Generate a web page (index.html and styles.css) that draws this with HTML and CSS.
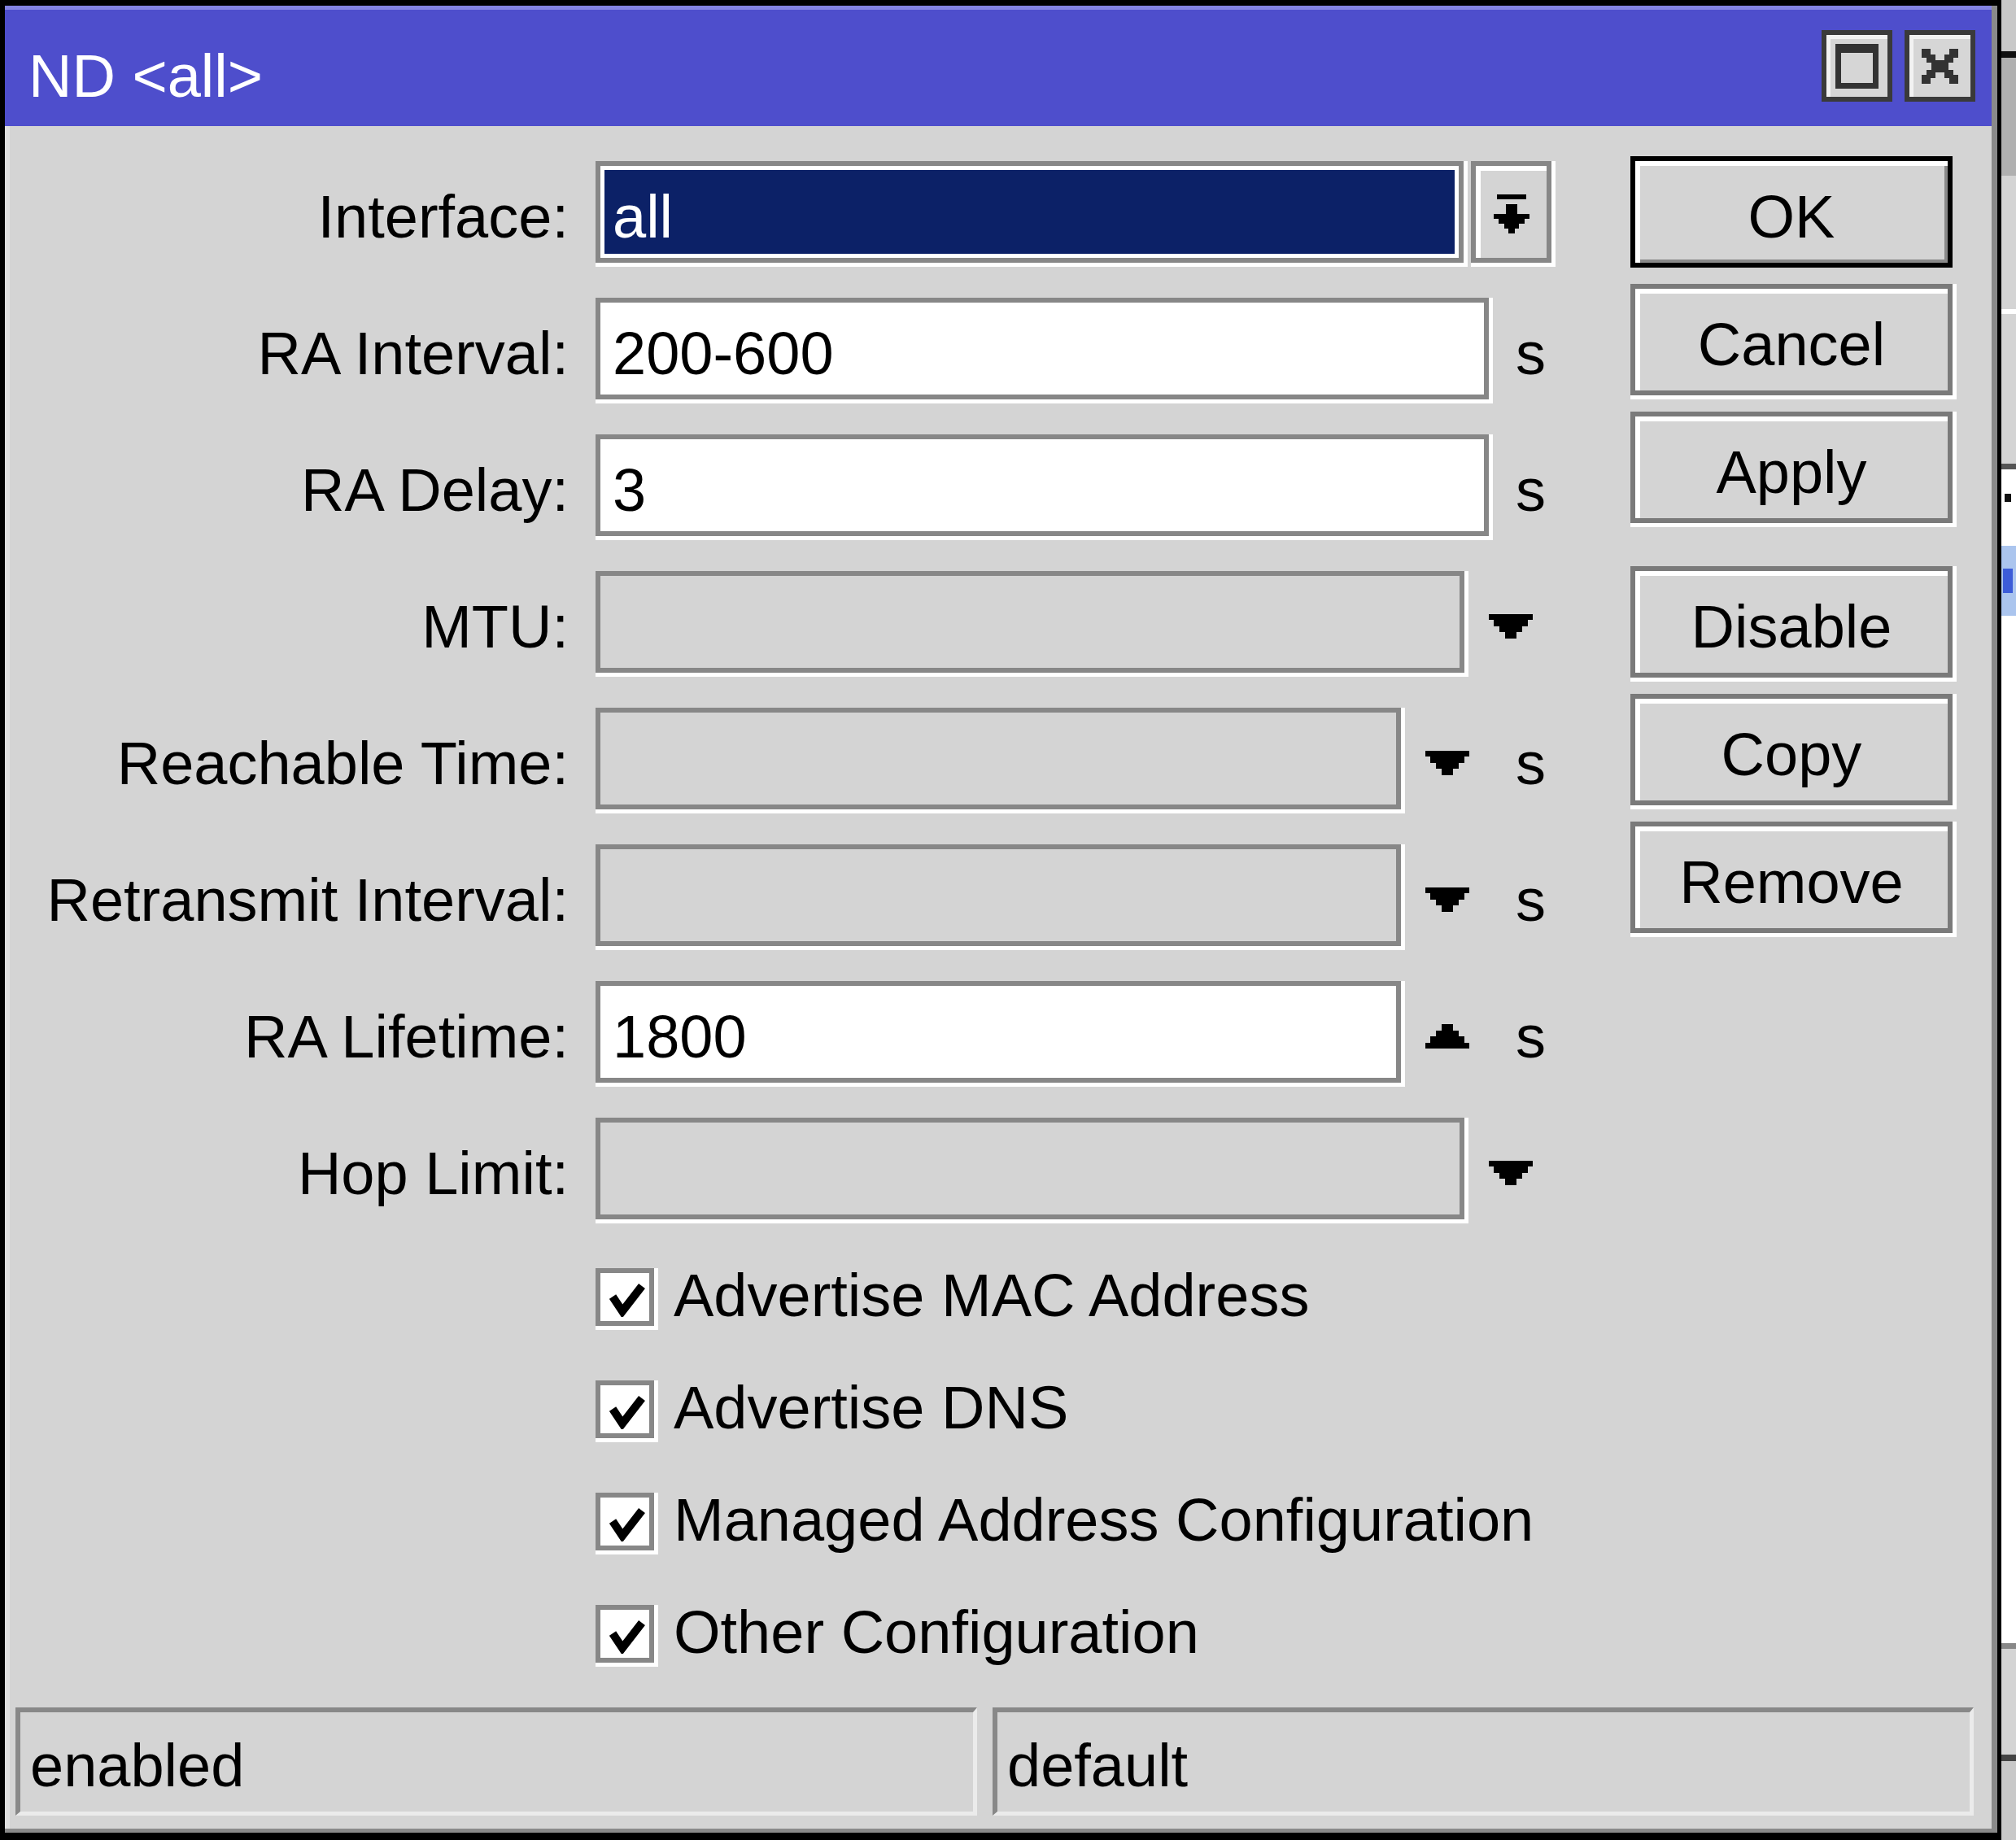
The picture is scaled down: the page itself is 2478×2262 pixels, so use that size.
FILE: index.html
```html
<!DOCTYPE html>
<html>
<head>
<meta charset="utf-8">
<title>ND &lt;all&gt;</title>
<link rel="stylesheet" href="styles.css">
</head>
<body>
<div class="screen">
  <div class="window">
    <div class="titlebar">
      <span class="title">ND &lt;all&gt;</span>
      <div class="tbtns">
        <div class="tbtn"><div class="maxicon"></div></div>
        <div class="tbtn">
          <svg class="closeicon" viewBox="0 0 45 43" width="45" height="43">
            <path d="M0 0H11V7H17V14H28V7H34V0H45V11H39V17H33V26H39V32H45V43H34V36H28V29H17V36H11V43H0V32H6V26H12V17H6V11H0Z" fill="#333"/>
          </svg>
        </div>
      </div>
    </div>
    <div class="body">
      <div class="main">
        <div class="form">
          <div class="row">
            <div class="label">Interface:</div>
            <div class="ctrl">
              <div class="field combo w-combo"><div class="sel">all</div></div>
              <div class="ddbtn">
                <svg viewBox="0 0 44 48" width="44" height="48">
                  <rect x="4" y="0" width="36" height="6" fill="#000"/>
                  <rect x="15" y="12" width="14" height="12" fill="#000"/>
                  <path d="M0 24H44V30H38V36H31V42H26V48H18V42H13V36H6V30H0Z" fill="#000"/>
                </svg>
              </div>
            </div>
          </div>
          <div class="row">
            <div class="label">RA Interval:</div>
            <div class="ctrl"><div class="field white w-long">200-600</div></div>
            <div class="unit">s</div>
          </div>
          <div class="row">
            <div class="label">RA Delay:</div>
            <div class="ctrl"><div class="field white w-long">3</div></div>
            <div class="unit">s</div>
          </div>
          <div class="row">
            <div class="label">MTU:</div>
            <div class="ctrl">
              <div class="field w-mid"></div>
              <svg class="arrow" viewBox="0 0 54 30" width="54" height="30"><path d="M0 0H54V7H48V15H41V22H34V30H20V22H13V15H6V7H0Z" fill="#000"/></svg>
            </div>
          </div>
          <div class="row">
            <div class="label">Reachable Time:</div>
            <div class="ctrl">
              <div class="field w-short"></div>
              <svg class="arrow" viewBox="0 0 54 30" width="54" height="30"><path d="M0 0H54V7H48V15H41V22H34V30H20V22H13V15H6V7H0Z" fill="#000"/></svg>
            </div>
            <div class="unit">s</div>
          </div>
          <div class="row">
            <div class="label">Retransmit Interval:</div>
            <div class="ctrl">
              <div class="field w-short"></div>
              <svg class="arrow" viewBox="0 0 54 30" width="54" height="30"><path d="M0 0H54V7H48V15H41V22H34V30H20V22H13V15H6V7H0Z" fill="#000"/></svg>
            </div>
            <div class="unit">s</div>
          </div>
          <div class="row">
            <div class="label">RA Lifetime:</div>
            <div class="ctrl">
              <div class="field white w-short">1800</div>
              <svg class="arrow" viewBox="0 0 54 30" width="54" height="30"><path d="M20 0H34V8H41V15H48V23H54V30H0V23H6V15H13V8H20Z" fill="#000"/></svg>
            </div>
            <div class="unit">s</div>
          </div>
          <div class="row">
            <div class="label">Hop Limit:</div>
            <div class="ctrl">
              <div class="field w-mid"></div>
              <svg class="arrow" viewBox="0 0 54 30" width="54" height="30"><path d="M0 0H54V7H48V15H41V22H34V30H20V22H13V15H6V7H0Z" fill="#000"/></svg>
            </div>
          </div>

          <div class="checks">
            <div class="check">
              <div class="cbox"><svg viewBox="0 0 44 42" width="44" height="42"><polyline points="4,17 16,35 40,4" fill="none" stroke="#000" stroke-width="10"/></svg></div>
              <span class="clabel">Advertise MAC Address</span>
            </div>
            <div class="check">
              <div class="cbox"><svg viewBox="0 0 44 42" width="44" height="42"><polyline points="4,17 16,35 40,4" fill="none" stroke="#000" stroke-width="10"/></svg></div>
              <span class="clabel">Advertise DNS</span>
            </div>
            <div class="check">
              <div class="cbox"><svg viewBox="0 0 44 42" width="44" height="42"><polyline points="4,17 16,35 40,4" fill="none" stroke="#000" stroke-width="10"/></svg></div>
              <span class="clabel">Managed Address Configuration</span>
            </div>
            <div class="check">
              <div class="cbox"><svg viewBox="0 0 44 42" width="44" height="42"><polyline points="4,17 16,35 40,4" fill="none" stroke="#000" stroke-width="10"/></svg></div>
              <span class="clabel">Other Configuration</span>
            </div>
          </div>
        </div>

        <div class="buttons">
          <div class="btn default">OK</div>
          <div class="btn">Cancel</div>
          <div class="btn">Apply</div>
          <div class="btn sep">Disable</div>
          <div class="btn">Copy</div>
          <div class="btn">Remove</div>
        </div>
      </div>

      <div class="status">
        <div class="panel p1">enabled</div>
        <div class="panel p2">default</div>
      </div>
    </div>
  </div>

  <div class="sidewin">
    <div class="sw sw-a"></div>
    <div class="sw sw-b"></div>
    <div class="sw sw-c"></div>
    <div class="sw sw-d"></div>
    <div class="sw sw-e"></div>
    <div class="sw sw-f"></div>
    <div class="sw sw-g"></div>
    <div class="sw sw-h"><span class="frag"></span></div>
    <div class="sw sw-i"><span class="frag blue"></span></div>
    <div class="sw sw-j"></div>
    <div class="sw sw-k"></div>
    <div class="sw sw-l"></div>
    <div class="sw sw-m"></div>
    <div class="sw sw-n"></div>
  </div>
</div>
</body>
</html>
```

FILE: styles.css
```css
* {
  box-sizing: border-box;
}

html, body {
  margin: 0;
  padding: 0;
}

body {
  background: #000;
  width: 2478px;
  height: 2262px;
  overflow: hidden;
  font-family: "Liberation Sans", Arial, sans-serif;
  font-size: 74px;
  color: #000;
}

.screen {
  display: flex;
  align-items: flex-start;
  padding-left: 6px;
  height: 2262px;
}

/* ---------- window ---------- */
.window {
  width: 2449px;
  height: 2246px;
  margin-top: 7px;
  flex-shrink: 0;
  background: #d4d4d4;
  border-right: 7px solid #8a8a8a;
  border-bottom: 5px solid #8a8a8a;
  display: flex;
  flex-direction: column;
}

.titlebar {
  height: 148px;
  flex-shrink: 0;
  background: #4e4ecc;
  border-top: 5px solid #8383e2;
  display: flex;
  align-items: flex-start;
  justify-content: space-between;
  padding: 0 20px 0 29px;
}

.title {
  color: #fff;
  line-height: 74px;
  margin-top: 45px;
  white-space: nowrap;
}

.tbtns {
  display: flex;
  gap: 15px;
  margin-top: 25px;
}

.tbtn {
  width: 87px;
  height: 88px;
  border: 6px solid #3a3a3a;
  background: #d6d6d6;
  box-shadow: inset 5px 5px 0 #f2f2f2;
  display: flex;
  align-items: center;
  justify-content: center;
}

.maxicon {
  width: 53px;
  height: 55px;
  border: 7px solid #333;
  border-top-width: 11px;
  background: #d6d6d6;
}

/* ---------- body ---------- */
.body {
  flex: 1;
  display: flex;
  flex-direction: column;
  border-left: 6px solid #e0e0e0;
}

.main {
  flex: 1;
  display: flex;
}

.form {
  width: 1992px;
  flex-shrink: 0;
  padding-top: 43px;
  display: flex;
  flex-direction: column;
}

.row {
  display: flex;
  height: 125px;
  margin-bottom: 43px;
}

.label {
  width: 687px;
  flex-shrink: 0;
  text-align: right;
  padding-top: 32px;
  line-height: 74px;
  white-space: nowrap;
}

.ctrl {
  width: 1131px;
  margin-left: 33px;
  flex-shrink: 0;
  display: flex;
  align-items: flex-start;
}

.field {
  height: 125px;
  flex-shrink: 0;
  border: 6px solid #878787;
  background: #d4d4d4;
  box-shadow: 5px 0 0 #fff, 0 5px 0 #fff, 5px 5px 0 #fff;
  padding: 26px 0 0 15px;
  line-height: 74px;
  white-space: nowrap;
}

.field.white {
  background: #fff;
}

.w-long { width: 1098px; }
.w-mid { width: 1068px; }
.w-short { width: 990px; }
.w-combo { width: 1067px; }

.field.combo {
  background: #fff;
  padding: 5px;
}

.sel {
  height: 100%;
  background: #0c2167;
  color: #fff;
  padding: 21px 0 0 10px;
  line-height: 74px;
}

.ddbtn {
  width: 99px;
  height: 125px;
  margin-left: 9px;
  flex-shrink: 0;
  border: 6px solid #878787;
  background: #d4d4d4;
  box-shadow: inset 6px 6px 0 #fff, 5px 0 0 #fff, 0 5px 0 #fff, 5px 5px 0 #fff;
  display: flex;
  align-items: center;
  justify-content: center;
  padding-top: 4px;
}

.arrow {
  display: block;
  flex-shrink: 0;
  margin-left: 30px;
  margin-top: 53px;
}

.unit {
  padding-top: 32px;
  line-height: 74px;
}

/* ---------- checkboxes ---------- */
.checks {
  margin-top: 17px;
  padding-left: 720px;
  display: flex;
  flex-direction: column;
  gap: 67px;
}

.check {
  display: flex;
  align-items: flex-start;
  height: 71px;
}

.cbox {
  width: 72px;
  height: 71px;
  flex-shrink: 0;
  border: 6px solid #878787;
  background: #fff;
  box-shadow: 5px 0 0 #fff, 0 5px 0 #fff, 5px 5px 0 #fff;
  padding: 12px 0 0 11px;
}

.cbox svg {
  display: block;
}

.clabel {
  margin-left: 24px;
  margin-top: -2px;
  line-height: 71px;
  white-space: nowrap;
}

/* ---------- buttons ---------- */
.buttons {
  width: 396px;
  flex-shrink: 0;
  padding-top: 37px;
  display: flex;
  flex-direction: column;
}

.btn {
  height: 137px;
  margin-bottom: 20px;
  border: 6px solid #7a7a7a;
  background: #d4d4d4;
  box-shadow: inset 6px 6px 0 #fff, 5px 0 0 #fff, 0 5px 0 #fff, 5px 5px 0 #fff;
  text-align: center;
  padding-top: 32px;
  line-height: 74px;
  white-space: nowrap;
}

.btn.default {
  border-color: #000;
  box-shadow: inset 6px 6px 0 #fff, inset -4px -4px 0 #8a8a8a;
}

.btn.sep {
  margin-top: 33px;
}

/* ---------- status bar ---------- */
.status {
  display: flex;
  gap: 19px;
  padding: 0 22px 16px 7px;
}

.panel {
  height: 133px;
  border-top: 6px solid #888;
  border-left: 6px solid #888;
  border-bottom: 5px solid #ebebeb;
  border-right: 5px solid #ebebeb;
  padding: 29px 0 0 12px;
  line-height: 74px;
  white-space: nowrap;
}

.p1 { width: 1182px; }
.p2 { width: 1206px; }

/* ---------- neighbouring window strip ---------- */
.sidewin {
  width: 18px;
  height: 2262px;
  margin-left: 5px;
  flex-shrink: 0;
  display: flex;
  flex-direction: column;
  overflow: hidden;
}

.sw { flex-shrink: 0; position: relative; }
.sw-a { height: 63px; background: #c8c8c8; }
.sw-b { height: 8px; background: #111; }
.sw-c { height: 145px; background: #b0b0b0; }
.sw-d { height: 164px; background: #d4d4d4; }
.sw-e { height: 6px; background: #fff; }
.sw-f { height: 184px; background: #d4d4d4; }
.sw-g { height: 7px; background: #555; }
.sw-h { height: 94px; background: #fff; }
.sw-i { height: 86px; background: #abc5ee; }
.sw-j { height: 1263px; background: #fff; }
.sw-k { height: 7px; background: #888; }
.sw-l { height: 130px; background: #d4d4d4; }
.sw-m { height: 8px; background: #444; }
.sw-n { flex: 1; background: #c8c8c8; }

.frag {
  display: block;
  width: 8px;
  height: 10px;
  margin: 30px 0 0 4px;
  background: #111;
}

.frag.blue {
  width: 12px;
  height: 30px;
  margin: 28px 0 0 2px;
  background: #3c5cd8;
}
```
